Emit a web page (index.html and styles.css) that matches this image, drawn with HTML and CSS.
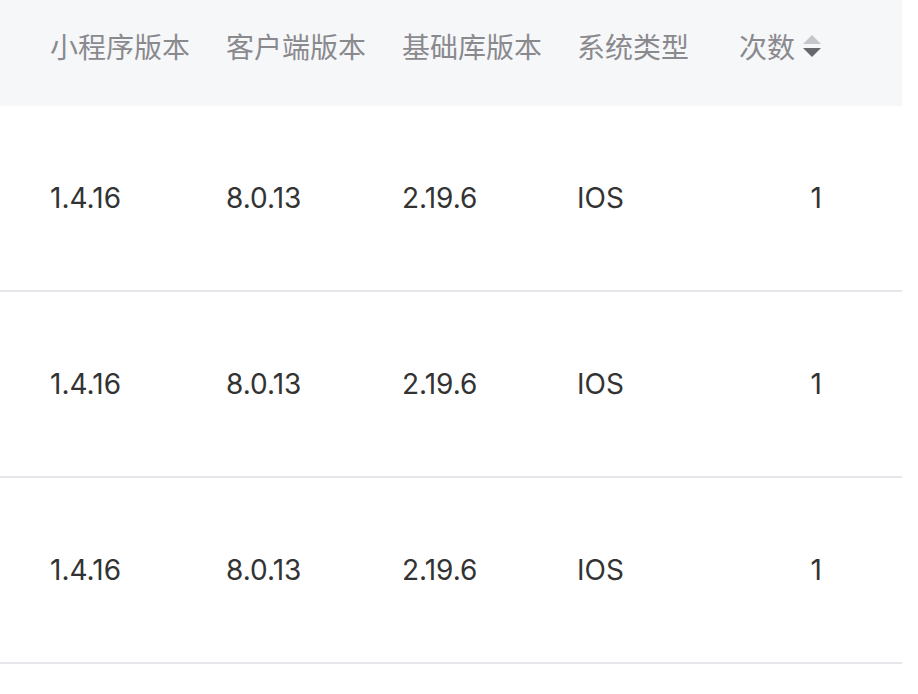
FILE: index.html
```html
<!DOCTYPE html>
<html lang="zh-CN">

<head>
    <meta charset="UTF-8">
    <meta name="viewport" content="width=device-width, initial-scale=1.0">
    <title>版本统计</title>
    <link rel="stylesheet" href="styles.css">
</head>

<body>
    <div class="tabel">
        <div class="raekke hoved">
            <div class="celle">小程序版本</div>
            <div class="celle">客户端版本</div>
            <div class="celle">基础库版本</div>
            <div class="celle">系统类型</div>
            <div class="celle tal">
                <span>次数</span>
                <svg class="sorter" width="20" height="22" viewBox="0 0 20 22">
                    <polygon points="10,0 19,9 1,9" fill="#c4c6cc" />
                    <polygon points="1,13 19,13 10,22" fill="#66686e" />
                </svg>
            </div>
        </div>
        <div class="raekke">
            <div class="celle">1.4.16</div>
            <div class="celle">8.0.13</div>
            <div class="celle">2.19.6</div>
            <div class="celle">IOS</div>
            <div class="celle tal">1</div>
        </div>
        <div class="raekke">
            <div class="celle">1.4.16</div>
            <div class="celle">8.0.13</div>
            <div class="celle">2.19.6</div>
            <div class="celle">IOS</div>
            <div class="celle tal">1</div>
        </div>
        <div class="raekke">
            <div class="celle">1.4.16</div>
            <div class="celle">8.0.13</div>
            <div class="celle">2.19.6</div>
            <div class="celle">IOS</div>
            <div class="celle tal">1</div>
        </div>
    </div>
</body>

</html>
```

FILE: styles.css
```css
* {
    box-sizing: border-box;
}

body {
    margin: 0;
    background-color: #fff;
    font-family: Inter, "Noto Sans CJK SC", sans-serif;
}

.tabel {
    width: 902px;
}

.raekke {
    display: grid;
    grid-template-columns: 176px 176px 175px 1fr auto;
    align-items: center;
    height: 186px;
    padding-left: 50px;
    border-bottom: 2px solid #e6e6eb;
    font-size: 28px;
    color: #333;
}

.raekke.hoved {
    height: 106px;
    padding-bottom: 14px;
    border-bottom: none;
    background-color: #f6f7f9;
    color: #8a8a8e;
    font-family: "Noto Sans CJK SC", sans-serif;
}

.celle {
    white-space: nowrap;
}

.tal {
    display: flex;
    justify-content: flex-end;
    align-items: center;
    gap: 7px;
    padding-right: 80px;
}

.sorter {
    display: block;
}
```
